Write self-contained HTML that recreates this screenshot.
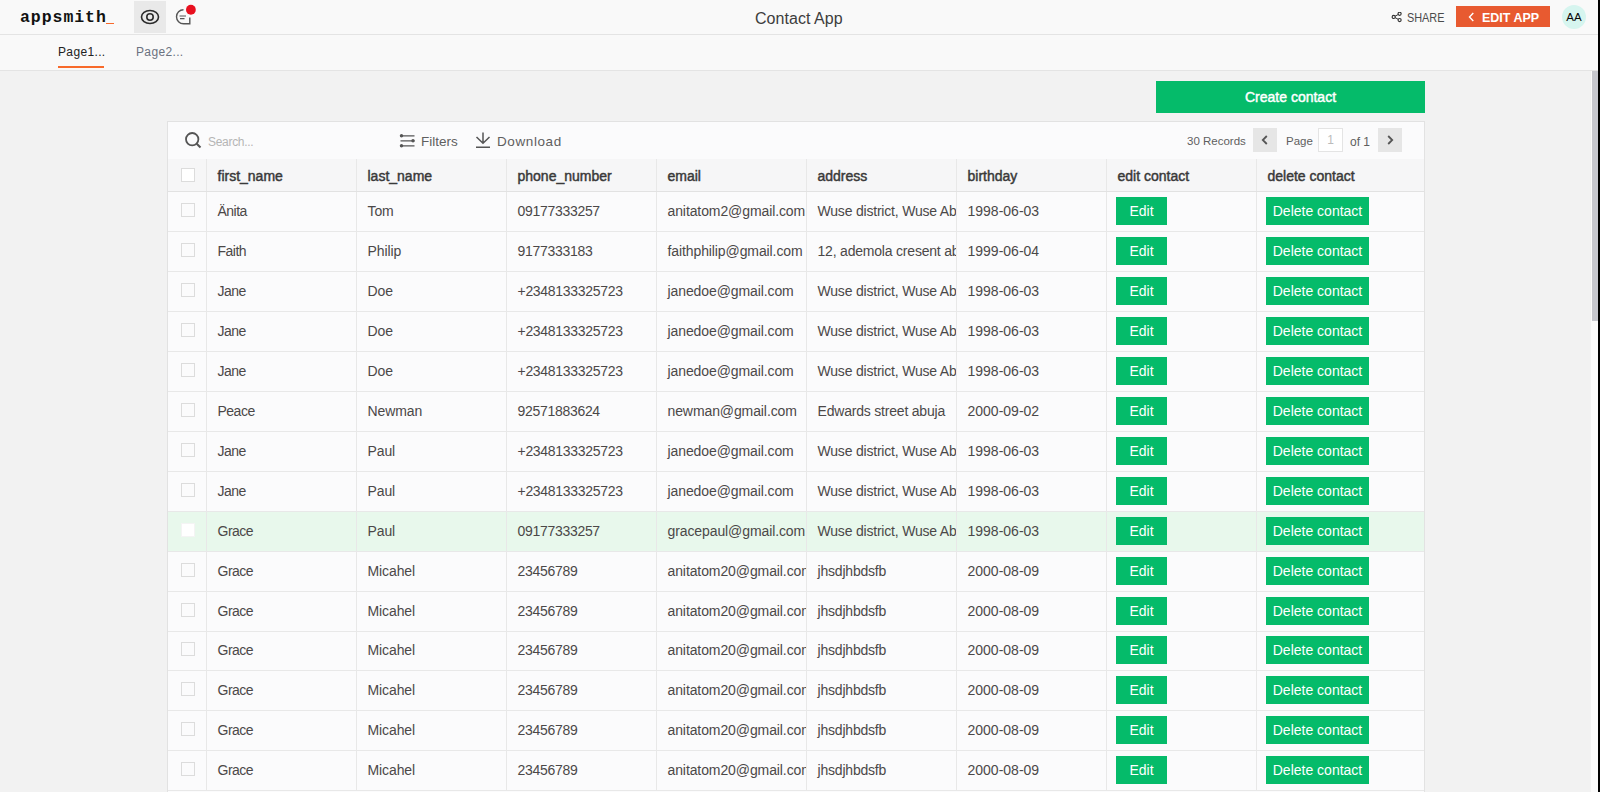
<!DOCTYPE html><html><head><meta charset="utf-8"><style>
*{box-sizing:border-box;margin:0;padding:0}
html,body{width:1600px;height:792px;overflow:hidden}
body{position:relative;background:#f2f2f2;font-family:"Liberation Sans",sans-serif;color:#4b4848}
.abs{position:absolute}
#hdr{left:0;top:0;width:1598px;height:35px;background:#f9f9f9;border-bottom:1px solid #e4e4e4}
#tabs{left:0;top:35px;width:1598px;height:36px;background:#f9f9f9;border-bottom:1px solid #e4e4e4}
#logo{left:20px;top:7.5px;font-family:"Liberation Mono",monospace;font-weight:bold;font-size:16.5px;color:#111;letter-spacing:0.95px}
#logo u{position:absolute;left:86px;top:15.5px;width:8px;height:1.3px;background:#f86a2b}
#eyebtn{left:134px;top:1px;width:32px;height:32px;background:#e9e9e9}
#title{left:755px;top:9.5px;font-size:16px;letter-spacing:0.05px;color:#3d3d3d}
#share{left:1392px;top:10.5px;font-size:12.5px;color:#4b4b4b;transform:scaleX(0.87);transform-origin:0 0}
#edit{left:1456px;top:6px;width:94px;height:21px;background:#e85a30;color:#fff;font-weight:bold;font-size:12.5px;line-height:21px}
#avatar{left:1562px;top:5px;width:24px;height:24px;border-radius:50%;background:#d6f5ef;color:#090707;font-size:11.5px;line-height:24px;text-align:center}
.tab{top:45px;font-size:12px;letter-spacing:0.35px}
#tab1{left:58px;color:#222}
#tab2{left:136px;color:#6b7280}
#tabul{left:58px;top:66px;width:46px;height:2px;background:#f86a2b}
#sbthumb{left:1592px;top:71px;width:6px;height:250px;background:#c6c7cd}
#sbtrack{left:1591px;top:71px;width:7px;height:721px;background:#fbfbfb}
#blk{left:1598px;top:0;width:2px;height:792px;background:#000}
#create{left:1156px;top:81px;width:269px;height:32px;background:#05bb6a;color:#fff;font-weight:normal;-webkit-text-stroke:0.45px #fff;font-size:14px;line-height:33px;text-align:center}
#tbl{left:167px;top:121px;width:1258px;height:700px;background:#fbfbfc;border:1px solid #e2e2e2}
#toolbar{left:0;top:0;width:1256px;height:37px}
.tb{position:absolute;font-size:13.5px;color:#5f5f5f}
#thead{left:0;top:37px;width:1256px;height:33px;background:#f6f6f7;border-bottom:1px solid #e2e2e2}
.row{position:absolute;left:0;width:1256px;height:40px;border-bottom:1px solid #e8e8e8}
.cell{position:absolute;top:0;height:100%;overflow:hidden;white-space:nowrap;border-right:1px solid #e8e8e8;font-size:14px;line-height:39px;padding-left:10.5px}
.hcell{font-weight:normal;-webkit-text-stroke:0.45px #393939;color:#393939;line-height:34px}
.cb{position:absolute;left:12.5px;top:11px;width:14px;height:14px;border:1px solid #dcdcdc;background:transparent}
#thead .cb{background:#fff}
.sel .cb{background:#fff;border-color:#f4f4f4}
.btn{display:inline-block;background:#05bb6a;color:#fff;height:28px;line-height:28px;vertical-align:top;margin-top:5px;font-size:14px;text-align:center}
.sel{background:#e8f8ec}
</style></head><body><div id="hdr" class="abs"></div><div id="tabs" class="abs"></div>
<div id="logo" class="abs">appsmith<u></u></div>
<div id="eyebtn" class="abs"></div>
<svg class="abs" style="left:140px;top:9px" width="20" height="16" viewBox="0 0 20 16"><ellipse cx="10" cy="8" rx="8.5" ry="6.5" fill="none" stroke="#2b2b2b" stroke-width="1.6"/><circle cx="10" cy="8" r="3.2" fill="none" stroke="#2b2b2b" stroke-width="1.6"/></svg>
<svg class="abs" style="left:174px;top:4px" width="24" height="22" viewBox="0 0 24 22"><path d="M9.5 5.8 a7 7 0 1 0 0 14 h6.3 v-6.3" fill="none" stroke="#555" stroke-width="1.4"/><path d="M5.5 12h6.5M6 14.6h4.5" stroke="#555" stroke-width="1.2"/><circle cx="16.9" cy="5.75" r="4.9" fill="#e8101f"/></svg>
<div id="title" class="abs">Contact App</div>
<svg class="abs" style="left:1391px;top:12px" width="12" height="11" viewBox="0 0 12 11"><circle cx="2.7" cy="4.9" r="1.55" fill="none" stroke="#333" stroke-width="1.15"/><circle cx="8.6" cy="1.8" r="1.55" fill="none" stroke="#333" stroke-width="1.15"/><circle cx="8.6" cy="8" r="1.55" fill="none" stroke="#333" stroke-width="1.15"/><path d="M4.1 4.2L7.2 2.5M4.1 5.6L7.2 7.3" stroke="#333" stroke-width="1"/></svg>
<div id="share" class="abs" style="left:1407px">SHARE</div>
<div id="edit" class="abs"><svg class="abs" style="left:12px;top:6px" width="7" height="10" viewBox="0 0 7 10"><path d="M5.3 1L1.5 5l3.8 4" fill="none" stroke="#fff" stroke-width="1.4"/></svg><span class="abs" style="left:26px;top:1.5px">EDIT APP</span></div>
<div id="avatar" class="abs">AA</div>
<div id="tab1" class="abs tab">Page1...</div><div id="tab2" class="abs tab">Page2...</div><div id="tabul" class="abs"></div>
<div id="sbtrack" class="abs"></div><div id="sbthumb" class="abs"></div><div id="blk" class="abs"></div>
<div id="create" class="abs">Create contact</div>
<div id="tbl" class="abs"><div id="toolbar" class="abs"><svg class="abs" style="left:16px;top:9px" width="20" height="20" viewBox="0 0 20 20"><circle cx="8.2" cy="8.2" r="6.2" fill="none" stroke="#555" stroke-width="1.8"/><path d="M12.7 12.7l3.8 3.8" stroke="#555" stroke-width="2"/></svg><div class="tb" style="left:40px;top:12.5px;color:#b5b5b5;font-size:12px;letter-spacing:-0.3px">Search...</div><svg class="abs" style="left:231px;top:11px" width="17" height="16" viewBox="0 0 17 16"><path d="M1.5 2.8h14M1.5 7.8h14M1.5 12.8h14" stroke="#555" stroke-width="1.3"/><circle cx="2.5" cy="2.8" r="1.7" fill="#555"/><circle cx="14" cy="7.8" r="1.7" fill="#555"/><circle cx="2.5" cy="12.8" r="1.7" fill="#555"/></svg><div class="tb" style="left:253px;top:12px">Filters</div><svg class="abs" style="left:307px;top:10px" width="16" height="17" viewBox="0 0 16 17"><path d="M8 0.5v11M1.5 5l6.5 6.3 6.5-6.3M1 15.3h14" fill="none" stroke="#555" stroke-width="1.5"/></svg><div class="tb" style="left:329px;top:12px;letter-spacing:0.6px">Download</div><div class="tb" style="left:1019px;top:13px;font-size:11.5px">30 Records</div><div class="abs" style="left:1085px;top:6px;width:24px;height:24px;background:#e6e6e6"><svg class="abs" style="left:8px;top:7px" width="8" height="10" viewBox="0 0 8 10"><path d="M5.8 1L1.8 5 5.8 9" fill="none" stroke="#555" stroke-width="1.8"/></svg></div><div class="tb" style="left:1118px;top:13px;font-size:11.5px">Page</div><div class="abs" style="left:1150px;top:6px;width:25px;height:24px;border:1px solid #e4e4e4;background:#fff;color:#bbb;font-size:12px;text-align:center;line-height:22px">1</div><div class="tb" style="left:1182px;top:13px;font-size:12px">of 1</div><div class="abs" style="left:1210px;top:6px;width:24px;height:24px;background:#e6e6e6"><svg class="abs" style="left:8px;top:7px" width="8" height="10" viewBox="0 0 8 10"><path d="M2.2 1L6.2 5 2.2 9" fill="none" stroke="#555" stroke-width="1.8"/></svg></div></div><div id="thead" class="abs"><div class="cell hcell" style="left:0px;width:39px;padding:0"><div class="cb" style="top:9px"></div></div><div class="cell hcell" style="left:39px;width:150px;">first_name</div><div class="cell hcell" style="left:189px;width:150px;">last_name</div><div class="cell hcell" style="left:339px;width:150px;">phone_number</div><div class="cell hcell" style="left:489px;width:150px;">email</div><div class="cell hcell" style="left:639px;width:150px;">address</div><div class="cell hcell" style="left:789px;width:150px;">birthday</div><div class="cell hcell" style="left:939px;width:150px;">edit contact</div><div class="cell hcell" style="left:1089px;width:167px;border-right:none;">delete contact</div></div><div class="row" style="top:70.0px"><div class="cell" style="left:0px;width:39px;padding:0"><div class="cb" style="top:11px"></div></div><div class="cell" style="left:39px;width:150px;letter-spacing:-0.5px;">Änita</div><div class="cell" style="left:189px;width:150px;letter-spacing:-0.1px;">Tom</div><div class="cell" style="left:339px;width:150px;letter-spacing:-0.3px;">09177333257</div><div class="cell" style="left:489px;width:150px;letter-spacing:-0.1px;">anitatom2@gmail.com</div><div class="cell" style="left:639px;width:150px;letter-spacing:-0.2px;">Wuse district, Wuse Abuja</div><div class="cell" style="left:789px;width:150px;">1998-06-03</div><div class="cell" style="left:939px;width:150px;padding-left:9px"><span class="btn" style="width:51px">Edit</span></div><div class="cell" style="left:1089px;width:167px;border-right:none;padding-left:9px"><span class="btn" style="width:103px">Delete contact</span></div></div><div class="row" style="top:109.95px"><div class="cell" style="left:0px;width:39px;padding:0"><div class="cb" style="top:11px"></div></div><div class="cell" style="left:39px;width:150px;letter-spacing:-0.5px;">Faith</div><div class="cell" style="left:189px;width:150px;letter-spacing:-0.1px;">Philip</div><div class="cell" style="left:339px;width:150px;letter-spacing:-0.3px;">9177333183</div><div class="cell" style="left:489px;width:150px;letter-spacing:-0.1px;">faithphilip@gmail.com</div><div class="cell" style="left:639px;width:150px;letter-spacing:-0.2px;">12, ademola cresent abuja</div><div class="cell" style="left:789px;width:150px;">1999-06-04</div><div class="cell" style="left:939px;width:150px;padding-left:9px"><span class="btn" style="width:51px">Edit</span></div><div class="cell" style="left:1089px;width:167px;border-right:none;padding-left:9px"><span class="btn" style="width:103px">Delete contact</span></div></div><div class="row" style="top:149.9px"><div class="cell" style="left:0px;width:39px;padding:0"><div class="cb" style="top:11px"></div></div><div class="cell" style="left:39px;width:150px;letter-spacing:-0.5px;">Jane</div><div class="cell" style="left:189px;width:150px;letter-spacing:-0.1px;">Doe</div><div class="cell" style="left:339px;width:150px;letter-spacing:-0.3px;">+2348133325723</div><div class="cell" style="left:489px;width:150px;letter-spacing:-0.1px;">janedoe@gmail.com</div><div class="cell" style="left:639px;width:150px;letter-spacing:-0.2px;">Wuse district, Wuse Abuja</div><div class="cell" style="left:789px;width:150px;">1998-06-03</div><div class="cell" style="left:939px;width:150px;padding-left:9px"><span class="btn" style="width:51px">Edit</span></div><div class="cell" style="left:1089px;width:167px;border-right:none;padding-left:9px"><span class="btn" style="width:103px">Delete contact</span></div></div><div class="row" style="top:189.85px"><div class="cell" style="left:0px;width:39px;padding:0"><div class="cb" style="top:11px"></div></div><div class="cell" style="left:39px;width:150px;letter-spacing:-0.5px;">Jane</div><div class="cell" style="left:189px;width:150px;letter-spacing:-0.1px;">Doe</div><div class="cell" style="left:339px;width:150px;letter-spacing:-0.3px;">+2348133325723</div><div class="cell" style="left:489px;width:150px;letter-spacing:-0.1px;">janedoe@gmail.com</div><div class="cell" style="left:639px;width:150px;letter-spacing:-0.2px;">Wuse district, Wuse Abuja</div><div class="cell" style="left:789px;width:150px;">1998-06-03</div><div class="cell" style="left:939px;width:150px;padding-left:9px"><span class="btn" style="width:51px">Edit</span></div><div class="cell" style="left:1089px;width:167px;border-right:none;padding-left:9px"><span class="btn" style="width:103px">Delete contact</span></div></div><div class="row" style="top:229.8px"><div class="cell" style="left:0px;width:39px;padding:0"><div class="cb" style="top:11px"></div></div><div class="cell" style="left:39px;width:150px;letter-spacing:-0.5px;">Jane</div><div class="cell" style="left:189px;width:150px;letter-spacing:-0.1px;">Doe</div><div class="cell" style="left:339px;width:150px;letter-spacing:-0.3px;">+2348133325723</div><div class="cell" style="left:489px;width:150px;letter-spacing:-0.1px;">janedoe@gmail.com</div><div class="cell" style="left:639px;width:150px;letter-spacing:-0.2px;">Wuse district, Wuse Abuja</div><div class="cell" style="left:789px;width:150px;">1998-06-03</div><div class="cell" style="left:939px;width:150px;padding-left:9px"><span class="btn" style="width:51px">Edit</span></div><div class="cell" style="left:1089px;width:167px;border-right:none;padding-left:9px"><span class="btn" style="width:103px">Delete contact</span></div></div><div class="row" style="top:269.75px"><div class="cell" style="left:0px;width:39px;padding:0"><div class="cb" style="top:11px"></div></div><div class="cell" style="left:39px;width:150px;letter-spacing:-0.5px;">Peace</div><div class="cell" style="left:189px;width:150px;letter-spacing:-0.1px;">Newman</div><div class="cell" style="left:339px;width:150px;letter-spacing:-0.3px;">92571883624</div><div class="cell" style="left:489px;width:150px;letter-spacing:-0.1px;">newman@gmail.com</div><div class="cell" style="left:639px;width:150px;letter-spacing:-0.2px;">Edwards street abuja</div><div class="cell" style="left:789px;width:150px;">2000-09-02</div><div class="cell" style="left:939px;width:150px;padding-left:9px"><span class="btn" style="width:51px">Edit</span></div><div class="cell" style="left:1089px;width:167px;border-right:none;padding-left:9px"><span class="btn" style="width:103px">Delete contact</span></div></div><div class="row" style="top:309.7px"><div class="cell" style="left:0px;width:39px;padding:0"><div class="cb" style="top:11px"></div></div><div class="cell" style="left:39px;width:150px;letter-spacing:-0.5px;">Jane</div><div class="cell" style="left:189px;width:150px;letter-spacing:-0.1px;">Paul</div><div class="cell" style="left:339px;width:150px;letter-spacing:-0.3px;">+2348133325723</div><div class="cell" style="left:489px;width:150px;letter-spacing:-0.1px;">janedoe@gmail.com</div><div class="cell" style="left:639px;width:150px;letter-spacing:-0.2px;">Wuse district, Wuse Abuja</div><div class="cell" style="left:789px;width:150px;">1998-06-03</div><div class="cell" style="left:939px;width:150px;padding-left:9px"><span class="btn" style="width:51px">Edit</span></div><div class="cell" style="left:1089px;width:167px;border-right:none;padding-left:9px"><span class="btn" style="width:103px">Delete contact</span></div></div><div class="row" style="top:349.65px"><div class="cell" style="left:0px;width:39px;padding:0"><div class="cb" style="top:11px"></div></div><div class="cell" style="left:39px;width:150px;letter-spacing:-0.5px;">Jane</div><div class="cell" style="left:189px;width:150px;letter-spacing:-0.1px;">Paul</div><div class="cell" style="left:339px;width:150px;letter-spacing:-0.3px;">+2348133325723</div><div class="cell" style="left:489px;width:150px;letter-spacing:-0.1px;">janedoe@gmail.com</div><div class="cell" style="left:639px;width:150px;letter-spacing:-0.2px;">Wuse district, Wuse Abuja</div><div class="cell" style="left:789px;width:150px;">1998-06-03</div><div class="cell" style="left:939px;width:150px;padding-left:9px"><span class="btn" style="width:51px">Edit</span></div><div class="cell" style="left:1089px;width:167px;border-right:none;padding-left:9px"><span class="btn" style="width:103px">Delete contact</span></div></div><div class="row sel" style="top:389.6px"><div class="cell" style="left:0px;width:39px;padding:0"><div class="cb" style="top:11px"></div></div><div class="cell" style="left:39px;width:150px;letter-spacing:-0.5px;">Grace</div><div class="cell" style="left:189px;width:150px;letter-spacing:-0.1px;">Paul</div><div class="cell" style="left:339px;width:150px;letter-spacing:-0.3px;">09177333257</div><div class="cell" style="left:489px;width:150px;letter-spacing:-0.1px;">gracepaul@gmail.com</div><div class="cell" style="left:639px;width:150px;letter-spacing:-0.2px;">Wuse district, Wuse Abuja</div><div class="cell" style="left:789px;width:150px;">1998-06-03</div><div class="cell" style="left:939px;width:150px;padding-left:9px"><span class="btn" style="width:51px">Edit</span></div><div class="cell" style="left:1089px;width:167px;border-right:none;padding-left:9px"><span class="btn" style="width:103px">Delete contact</span></div></div><div class="row" style="top:429.55px"><div class="cell" style="left:0px;width:39px;padding:0"><div class="cb" style="top:11px"></div></div><div class="cell" style="left:39px;width:150px;letter-spacing:-0.5px;">Grace</div><div class="cell" style="left:189px;width:150px;letter-spacing:-0.1px;">Micahel</div><div class="cell" style="left:339px;width:150px;letter-spacing:-0.3px;">23456789</div><div class="cell" style="left:489px;width:150px;letter-spacing:-0.1px;">anitatom20@gmail.com</div><div class="cell" style="left:639px;width:150px;letter-spacing:-0.2px;">jhsdjhbdsfb</div><div class="cell" style="left:789px;width:150px;">2000-08-09</div><div class="cell" style="left:939px;width:150px;padding-left:9px"><span class="btn" style="width:51px">Edit</span></div><div class="cell" style="left:1089px;width:167px;border-right:none;padding-left:9px"><span class="btn" style="width:103px">Delete contact</span></div></div><div class="row" style="top:469.5px"><div class="cell" style="left:0px;width:39px;padding:0"><div class="cb" style="top:11px"></div></div><div class="cell" style="left:39px;width:150px;letter-spacing:-0.5px;">Grace</div><div class="cell" style="left:189px;width:150px;letter-spacing:-0.1px;">Micahel</div><div class="cell" style="left:339px;width:150px;letter-spacing:-0.3px;">23456789</div><div class="cell" style="left:489px;width:150px;letter-spacing:-0.1px;">anitatom20@gmail.com</div><div class="cell" style="left:639px;width:150px;letter-spacing:-0.2px;">jhsdjhbdsfb</div><div class="cell" style="left:789px;width:150px;">2000-08-09</div><div class="cell" style="left:939px;width:150px;padding-left:9px"><span class="btn" style="width:51px">Edit</span></div><div class="cell" style="left:1089px;width:167px;border-right:none;padding-left:9px"><span class="btn" style="width:103px">Delete contact</span></div></div><div class="row" style="top:509.45px"><div class="cell" style="left:0px;width:39px;padding:0"><div class="cb" style="top:11px"></div></div><div class="cell" style="left:39px;width:150px;letter-spacing:-0.5px;">Grace</div><div class="cell" style="left:189px;width:150px;letter-spacing:-0.1px;">Micahel</div><div class="cell" style="left:339px;width:150px;letter-spacing:-0.3px;">23456789</div><div class="cell" style="left:489px;width:150px;letter-spacing:-0.1px;">anitatom20@gmail.com</div><div class="cell" style="left:639px;width:150px;letter-spacing:-0.2px;">jhsdjhbdsfb</div><div class="cell" style="left:789px;width:150px;">2000-08-09</div><div class="cell" style="left:939px;width:150px;padding-left:9px"><span class="btn" style="width:51px">Edit</span></div><div class="cell" style="left:1089px;width:167px;border-right:none;padding-left:9px"><span class="btn" style="width:103px">Delete contact</span></div></div><div class="row" style="top:549.4px"><div class="cell" style="left:0px;width:39px;padding:0"><div class="cb" style="top:11px"></div></div><div class="cell" style="left:39px;width:150px;letter-spacing:-0.5px;">Grace</div><div class="cell" style="left:189px;width:150px;letter-spacing:-0.1px;">Micahel</div><div class="cell" style="left:339px;width:150px;letter-spacing:-0.3px;">23456789</div><div class="cell" style="left:489px;width:150px;letter-spacing:-0.1px;">anitatom20@gmail.com</div><div class="cell" style="left:639px;width:150px;letter-spacing:-0.2px;">jhsdjhbdsfb</div><div class="cell" style="left:789px;width:150px;">2000-08-09</div><div class="cell" style="left:939px;width:150px;padding-left:9px"><span class="btn" style="width:51px">Edit</span></div><div class="cell" style="left:1089px;width:167px;border-right:none;padding-left:9px"><span class="btn" style="width:103px">Delete contact</span></div></div><div class="row" style="top:589.35px"><div class="cell" style="left:0px;width:39px;padding:0"><div class="cb" style="top:11px"></div></div><div class="cell" style="left:39px;width:150px;letter-spacing:-0.5px;">Grace</div><div class="cell" style="left:189px;width:150px;letter-spacing:-0.1px;">Micahel</div><div class="cell" style="left:339px;width:150px;letter-spacing:-0.3px;">23456789</div><div class="cell" style="left:489px;width:150px;letter-spacing:-0.1px;">anitatom20@gmail.com</div><div class="cell" style="left:639px;width:150px;letter-spacing:-0.2px;">jhsdjhbdsfb</div><div class="cell" style="left:789px;width:150px;">2000-08-09</div><div class="cell" style="left:939px;width:150px;padding-left:9px"><span class="btn" style="width:51px">Edit</span></div><div class="cell" style="left:1089px;width:167px;border-right:none;padding-left:9px"><span class="btn" style="width:103px">Delete contact</span></div></div><div class="row" style="top:629.3px"><div class="cell" style="left:0px;width:39px;padding:0"><div class="cb" style="top:11px"></div></div><div class="cell" style="left:39px;width:150px;letter-spacing:-0.5px;">Grace</div><div class="cell" style="left:189px;width:150px;letter-spacing:-0.1px;">Micahel</div><div class="cell" style="left:339px;width:150px;letter-spacing:-0.3px;">23456789</div><div class="cell" style="left:489px;width:150px;letter-spacing:-0.1px;">anitatom20@gmail.com</div><div class="cell" style="left:639px;width:150px;letter-spacing:-0.2px;">jhsdjhbdsfb</div><div class="cell" style="left:789px;width:150px;">2000-08-09</div><div class="cell" style="left:939px;width:150px;padding-left:9px"><span class="btn" style="width:51px">Edit</span></div><div class="cell" style="left:1089px;width:167px;border-right:none;padding-left:9px"><span class="btn" style="width:103px">Delete contact</span></div></div></div></body></html>
